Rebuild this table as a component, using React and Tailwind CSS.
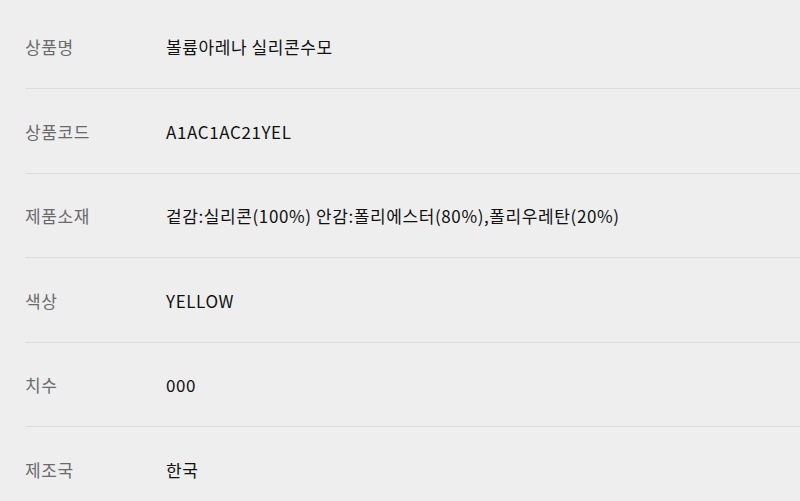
const rows = [
  { label: "상품명", value: "볼륨아레나 실리콘수모" },
  { label: "상품코드", value: "A1AC1AC21YEL" },
  { label: "제품소재", value: "겉감:실리콘(100%) 안감:폴리에스터(80%),폴리우레탄(20%)" },
  { label: "색상", value: "YELLOW" },
  { label: "치수", value: "000" },
  { label: "제조국", value: "한국" },
];

export default function App() {
  return (
    <div
      className="w-[800px] h-[501px] overflow-hidden bg-[#eeeeee] pl-[25px] pt-[4.5px]"
      style={{ fontFamily: '"Noto Sans CJK KR", "Noto Sans", sans-serif' }}
    >
      {rows.map((row) => (
        <div
          key={row.label}
          className="flex items-center h-[84.5px] pt-[2px] border-b border-[#dcdcdc] text-[17px] tracking-[0.6px] leading-6"
        >
          <div className="w-[141px] shrink-0 text-[#6b6b6b]">{row.label}</div>
          <div className="text-[#111111]">{row.value}</div>
        </div>
      ))}
    </div>
  );
}
